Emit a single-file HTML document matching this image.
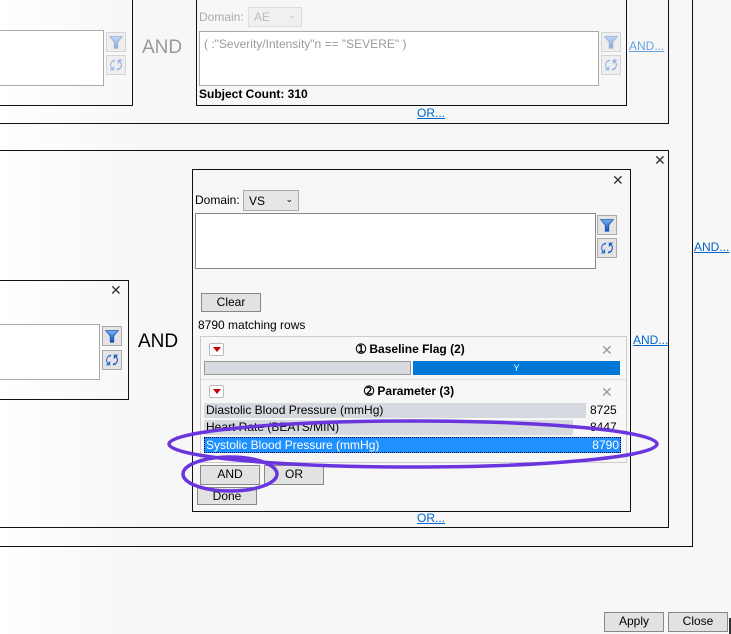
<!DOCTYPE html>
<html><head><meta charset="utf-8"><style>
*{box-sizing:border-box;margin:0;padding:0}
body{width:731px;height:634px;overflow:hidden;background:#f7f7f7;font-family:"Liberation Sans",sans-serif;font-size:12px;color:#000;position:relative}
.a{position:absolute}
.bx{position:absolute;border:1px solid #111}
.ta{position:absolute;background:#fff;border:1px solid #aaa}
.btn{position:absolute;background:#e2e2e2;border:1px solid #888;text-align:center;font-size:12px;line-height:17px}
.ib{position:absolute;width:20px;height:20px;background:#e4e4e4;border:1px solid #aaa}
.lk{position:absolute;color:#0066cc;text-decoration:underline;font-size:12px}
.x{position:absolute;font-size:14px;color:#333;line-height:14px}
.faded{opacity:.45}
</style></head><body>
<div class="a" style="left:0;top:0;width:140px;height:634px;background:linear-gradient(90deg,#fff,#f7f7f7)"></div>
<svg width="0" height="0" style="position:absolute"><defs>
<linearGradient id="fg" x1="0" y1="0" x2="0" y2="1"><stop offset="0" stop-color="#6fb3ff"/><stop offset="1" stop-color="#0b4fb8"/></linearGradient>
<symbol id="fun" viewBox="0 0 20 20"><path d="M3 4h14l-5 6v7h-4v-7z" fill="url(#fg)" stroke="#1b4d9a" stroke-width=".8"/></symbol>
<symbol id="ref" viewBox="0 0 20 20"><path d="M9 4a6 6 0 0 0-4 10l-2 2h5v-5l-2 2a4 4 0 0 1 3-7z" fill="#2e6fd8"/><path d="M11 16a6 6 0 0 0 4-10l2-2h-5v5l2-2a4 4 0 0 1-3 7z" fill="#1d58c4"/></symbol>
</defs></svg>

<div class="bx" style="left:-5px;top:-5px;width:698px;height:552px;border-width:0 1px 1px 0"></div>
<div class="bx" style="left:-5px;top:-5px;width:674px;height:129px;border-width:0 1px 1px 0"></div>
<div class="bx" style="left:-5px;top:-5px;width:138px;height:111px;border-width:0 1px 1px 0"></div>
<div class="ta" style="left:-2px;top:30px;width:106px;height:56px"></div>
<div class="ib faded" style="left:106px;top:32px"><svg width="18" height="18"><use href="#fun"/></svg></div>
<div class="ib faded" style="left:106px;top:55px"><svg width="18" height="18"><use href="#ref"/></svg></div>
<div class="a" style="left:142px;top:37px;font-size:19px;color:#999">AND</div>
<div class="bx" style="left:196px;top:-5px;width:431px;height:111px;border-top:0"></div>
<div class="a" style="left:199px;top:10px;color:#aaa">Domain:</div>
<div class="a" style="left:248px;top:7px;width:54px;height:20px;border:1px solid #ddd;background:#f0f0f0;color:#bbb;padding:2px 5px">AE<span style="float:right;font-size:9px">⌄</span></div>
<div class="ta" style="left:199px;top:31px;width:400px;height:55px;color:#999;padding:5px 4px;font-size:12px">( :"Severity/Intensity"n == "SEVERE" )</div>
<div class="ib faded" style="left:601px;top:32px"><svg width="18" height="18"><use href="#fun"/></svg></div>
<div class="ib faded" style="left:601px;top:55px"><svg width="18" height="18"><use href="#ref"/></svg></div>
<div class="lk" style="left:629px;top:39px;opacity:.6">AND...</div>
<div class="a" style="left:199px;top:87px;font-weight:bold">Subject Count: 310</div>
<div class="lk" style="left:417px;top:106px">OR...</div>

<div class="bx" style="left:-5px;top:150px;width:674px;height:378px;border-left:0"></div>
<div class="x" style="left:654px;top:153px">✕</div>
<div class="lk" style="left:694px;top:240px">AND...</div>
<div class="bx" style="left:-5px;top:280px;width:134px;height:120px;border-left:0"></div>
<div class="x" style="left:110px;top:283px">✕</div>
<div class="ta" style="left:-2px;top:324px;width:102px;height:56px"></div>
<div class="ib" style="left:102px;top:326px"><svg width="18" height="18"><use href="#fun"/></svg></div>
<div class="ib" style="left:102px;top:350px"><svg width="18" height="18"><use href="#ref"/></svg></div>
<div class="a" style="left:138px;top:331px;font-size:19px">AND</div>

<div class="bx" style="left:192px;top:169px;width:439px;height:343px"></div>
<div class="x" style="left:612px;top:173px">✕</div>
<div class="a" style="left:195px;top:193px">Domain:</div>
<div class="a" style="left:243px;top:190px;width:56px;height:21px;border:1px solid #aaa;background:#e6e6e6;padding:3px 5px">VS<span style="float:right;font-size:9px">⌄</span></div>
<div class="ta" style="left:195px;top:213px;width:401px;height:56px;border-color:#888"></div>
<div class="ib" style="left:597px;top:215px"><svg width="18" height="18"><use href="#fun"/></svg></div>
<div class="ib" style="left:597px;top:238px"><svg width="18" height="18"><use href="#ref"/></svg></div>
<div class="btn" style="left:201px;top:293px;width:60px;height:19px">Clear</div>
<div class="a" style="left:198px;top:318px">8790 matching rows</div>
<div class="lk" style="left:633px;top:333px">AND...</div>

<div class="a" style="left:200px;top:336px;width:427px;height:127px;border:1px solid #ccc;background:#f7f7f7"></div>
<div class="a" style="left:209px;top:343px;width:15px;height:13px;border:1px solid #bbb;background:#fff;border-radius:2px"><div class="a" style="left:3px;top:3px;border:4px solid transparent;border-top:5px solid #c00;border-bottom:0"></div></div>
<div class="a" style="left:356px;top:342px;font-weight:bold">➀ Baseline Flag (2)</div>
<div class="x" style="left:601px;top:343px;color:#999">✕</div>
<div class="a" style="left:204px;top:361px;width:207px;height:14px;background:#d6dae0;border:1px solid #999"></div>
<div class="a" style="left:413px;top:361px;width:207px;height:14px;background:#0078d7;color:#fff;font-size:9px;text-align:center;line-height:14px">Y</div>
<div class="a" style="left:201px;top:379px;width:425px;border-top:1px solid #ddd"></div>
<div class="a" style="left:209px;top:385px;width:15px;height:13px;border:1px solid #bbb;background:#fff;border-radius:2px"><div class="a" style="left:3px;top:3px;border:4px solid transparent;border-top:5px solid #c00;border-bottom:0"></div></div>
<div class="a" style="left:364px;top:384px;font-weight:bold">➁ Parameter (3)</div>
<div class="x" style="left:601px;top:385px;color:#999">✕</div>
<div class="a" style="left:204px;top:403px;width:382px;height:15px;background:#d6dae0"></div>
<div class="a" style="left:206px;top:403px">Diastolic Blood Pressure (mmHg)</div>
<div class="a" style="left:590px;top:403px">8725</div>
<div class="a" style="left:204px;top:420px;width:369px;height:15px;background:#d6dae0"></div>
<div class="a" style="left:206px;top:420px">Heart Rate (BEATS/MIN)</div>
<div class="a" style="left:590px;top:420px">8447</div>
<div class="a" style="left:204px;top:437px;width:417px;height:16px;background:#1e90ff;border:1px dotted #003;color:#fff;padding:0 1px"><span style="float:right">8790</span>Systolic Blood Pressure (mmHg)</div>
<div class="btn" style="left:200px;top:465px;width:60px;height:20px">AND</div>
<div class="btn" style="left:264px;top:465px;width:60px;height:20px">OR</div>
<div class="btn" style="left:197px;top:487px;width:60px;height:18px">Done</div>
<div class="lk" style="left:417px;top:511px">OR...</div>

<svg class="a" style="left:0;top:0" width="731" height="634">
<ellipse cx="413" cy="444" rx="244" ry="23" fill="none" stroke="#6a35dd" stroke-width="3.5"/>
<ellipse cx="230" cy="474" rx="47" ry="17" fill="none" stroke="#6a35dd" stroke-width="3.5"/>
</svg>

<div class="btn" style="left:604px;top:612px;width:60px;height:20px">Apply</div>
<div class="btn" style="left:668px;top:612px;width:60px;height:20px">Close</div>
<div class="a" style="left:729px;top:618px;width:2px;height:16px;background:#333"></div>
</body></html>
